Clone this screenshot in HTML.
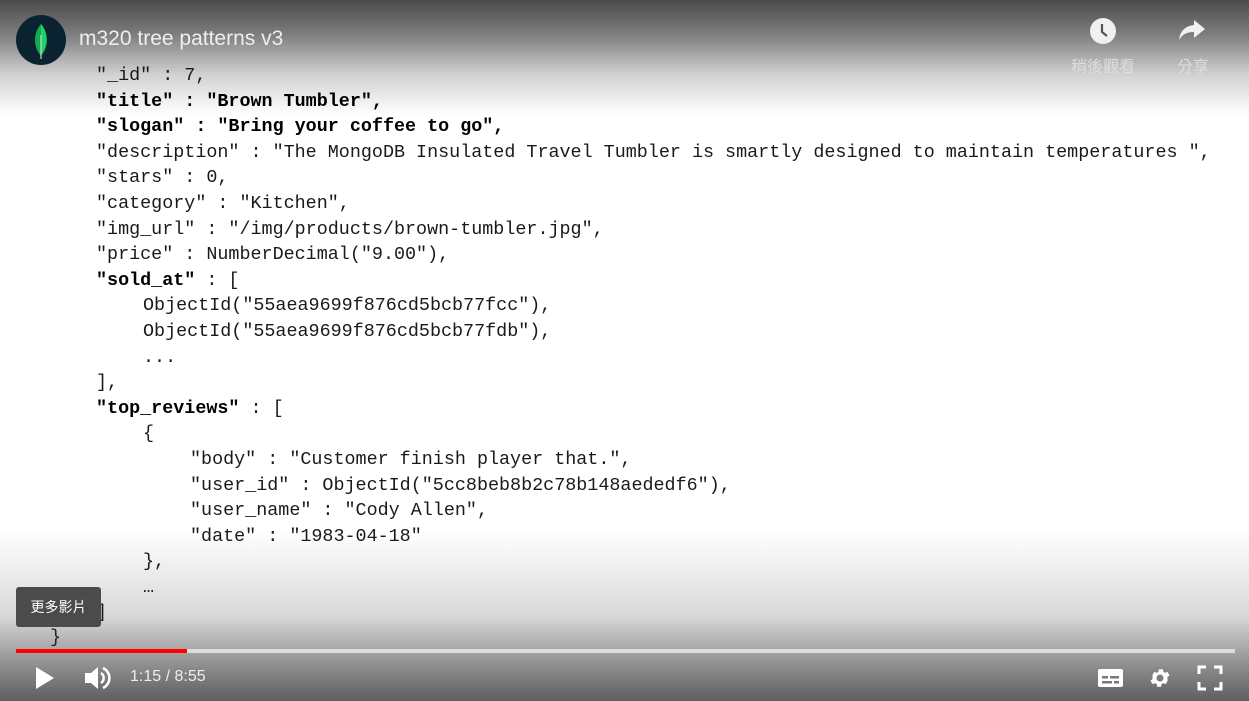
<!DOCTYPE html>
<html><head><meta charset="utf-8"><style>
html,body{margin:0;padding:0;width:1249px;height:701px;overflow:hidden;background:#fff;position:relative;font-family:"Liberation Sans","Noto Sans CJK TC",sans-serif}
.top{position:absolute;left:0;top:0;width:1249px;height:115px;background:linear-gradient(#4a4a4a 0%,#7e7e7e 30%,rgba(190,190,190,.7) 65%,rgba(255,255,255,0) 100%)}
.bot{position:absolute;left:0;bottom:0;width:1249px;height:170px;background:linear-gradient(rgba(255,255,255,0) 0%,rgba(190,190,190,.6) 50%,#8c8c8c 80%,#5e5e5e 100%)}
.code{position:absolute;left:96px;top:63px;font-family:"Liberation Mono",monospace;font-size:18.4px;line-height:25.6px;color:#1a1a1a}
.code div{height:25.6px;white-space:pre}
.i1{padding-left:47px}.i2{padding-left:94px}
b{font-weight:bold;color:#000}
.logo{position:absolute;left:16px;top:15px;width:50px;height:50px;border-radius:50%;background:#0b2330}
.title{position:absolute;left:79px;top:27px;font-size:21px;color:#eee}
.ic{position:absolute;color:#e8e8e8;font-size:16px;text-align:center}
.tip{position:absolute;left:16px;top:587px;width:85px;height:40px;background:#4b4b4b;border-radius:3px;color:#fff;font-size:14px;line-height:40px;text-align:center}
.prog{position:absolute;left:16px;top:649px;width:1219px;height:4px;background:#ddd}
.prog div{width:171px;height:4px;background:#f00}
.time{position:absolute;left:130px;top:668px;color:#eee;font-size:16px}
</style></head><body>
<div class="top"></div><div class="bot"></div>
<div class="code"><div>"_id" : 7,</div><div><b>"title" : "Brown Tumbler",</b></div><div><b>"slogan" : "Bring your coffee to go",</b></div><div>"description" : "The MongoDB Insulated Travel Tumbler is smartly designed to maintain temperatures ",</div><div>"stars" : 0,</div><div>"category" : "Kitchen",</div><div>"img_url" : "/img/products/brown-tumbler.jpg",</div><div>"price" : NumberDecimal("9.00"),</div><div><b>"sold_at"</b> : [</div><div class="i1">ObjectId("55aea9699f876cd5bcb77fcc"),</div><div class="i1">ObjectId("55aea9699f876cd5bcb77fdb"),</div><div class="i1">...</div><div>],</div><div><b>"top_reviews"</b> : [</div><div class="i1">{</div><div class="i2">"body" : "Customer finish player that.",</div><div class="i2">"user_id" : ObjectId("5cc8beb8b2c78b148aededf6"),</div><div class="i2">"user_name" : "Cody Allen",</div><div class="i2">"date" : "1983-04-18"</div><div class="i1">},</div><div class="i1">…</div><div>]</div></div>
<div style="position:absolute;left:50px;top:627px;font-family:'Liberation Mono',monospace;font-size:18.4px;color:#222">}</div>
<div class="logo"><svg width="50" height="50" viewBox="0 0 50 50"><path d="M25 9 C33 18 33 32 25 41 C17 32 17 18 25 9Z" fill="#13aa52"/><path d="M25 9 C32 18 32 31 25 39 Z" fill="#1fd36a"/><line x1="25" y1="20" x2="25" y2="44" stroke="#b8e0c0" stroke-width="1.2"/></svg></div>
<div class="title">m320 tree patterns v3</div>
<svg style="position:absolute;left:1089px;top:17px" width="28" height="28" viewBox="0 0 28 28"><circle cx="14" cy="14" r="13" fill="#f0f0f0"/><path d="M13 7 V15 L18 19" stroke="#555" stroke-width="2.2" fill="none"/></svg>
<div class="ic" style="left:1066px;top:53px;width:74px;color:#ddd">稍後觀看</div>
<svg style="position:absolute;left:1178px;top:18px" width="28" height="24" viewBox="0 0 28 24"><path d="M16 2 L27 11 L16 20 V14 C8 14 4 17 1 22 C2 13 7 8 16 7Z" fill="#f0f0f0"/></svg>
<div class="ic" style="left:1170px;top:53px;width:46px;color:#ddd">分享</div>
<div class="tip">更多影片</div>
<div class="prog"><div></div></div>
<svg style="position:absolute;left:34px;top:665px" width="22" height="26" viewBox="0 0 22 26"><path d="M2 2 L20 13 L2 24Z" fill="#fff"/></svg>
<svg style="position:absolute;left:83px;top:664px" width="30" height="28" viewBox="0 0 30 28"><path d="M2 9 H8 L15 3 V25 L8 19 H2Z" fill="#fff"/><path d="M18 9 A6 6 0 0 1 18 19" stroke="#fff" stroke-width="2.5" fill="none"/><path d="M20 4 A11 11 0 0 1 20 24" stroke="#fff" stroke-width="2.5" fill="none"/></svg>
<div class="time">1:15 / 8:55</div>
<svg style="position:absolute;left:1097px;top:667px" width="27" height="22" viewBox="0 0 27 22"><rect x="1" y="2" width="25" height="18" rx="2" fill="#fff"/><rect x="5" y="9" width="6" height="2.5" fill="#777"/><rect x="13" y="9" width="9" height="2.5" fill="#777"/><rect x="5" y="14" width="10" height="2.5" fill="#777"/><rect x="17" y="14" width="5" height="2.5" fill="#777"/></svg>
<svg style="position:absolute;left:1148px;top:666px" width="24" height="24" viewBox="0 0 24 24"><path fill="#fff" d="M19.4 13c0-.3.1-.7.1-1s0-.7-.1-1l2.1-1.6-2-3.5-2.5 1a7 7 0 0 0-1.7-1l-.4-2.6h-4l-.4 2.6a7 7 0 0 0-1.7 1l-2.5-1-2 3.5L4.6 11c0 .3-.1.7-.1 1s0 .7.1 1l-2.1 1.6 2 3.5 2.5-1c.5.4 1.1.7 1.7 1l.4 2.6h4l.4-2.6c.6-.3 1.2-.6 1.7-1l2.5 1 2-3.5zM12 15.5a3.5 3.5 0 1 1 0-7 3.5 3.5 0 0 1 0 7z"/></svg>
<svg style="position:absolute;left:1197px;top:665px" width="26" height="26" viewBox="0 0 26 26"><path d="M2 9 V2 H9 M17 2 H24 V9 M24 17 V24 H17 M9 24 H2 V17" stroke="#fff" stroke-width="3" fill="none"/></svg>
</body></html>
